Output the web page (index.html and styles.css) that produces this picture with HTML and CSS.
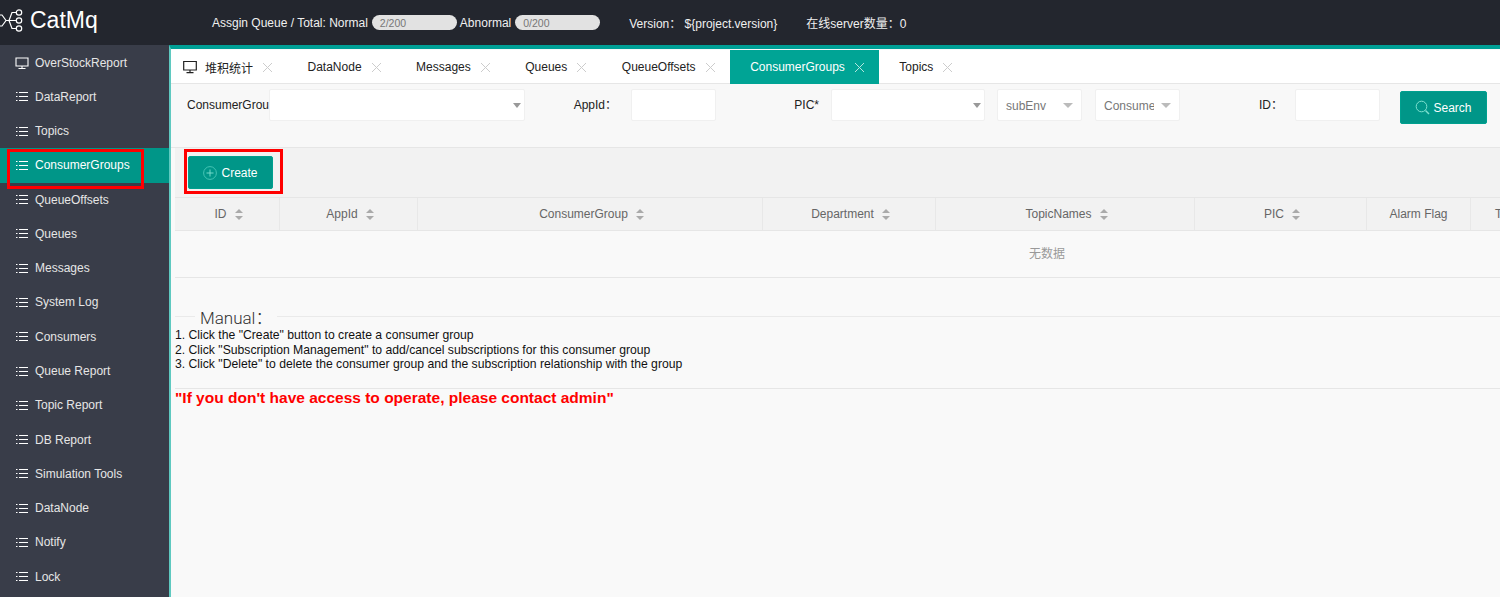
FILE: index.html
```html
<!DOCTYPE html>
<html lang="en">
<head>
  <meta charset="UTF-8">
  <title>CatMq</title>
  <link rel="stylesheet" href="styles.css">
</head>
<body>

  <!-- Top bar -->
  <header class="top-bar">
    <div class="logo">
      <svg class="logo-icon" viewBox="0 0 30 27" width="30" height="27">
        <path d="M1 8H7L11 13.5L7 19H1" fill="none" stroke="#fff" stroke-width="1.2"/>
        <path d="M11 13.5H21M14 13.5L17 5.5H21M14 13.5L17 21.5H21" fill="none" stroke="#fff" stroke-width="1.2"/>
        <circle cx="24" cy="5.5" r="2.7" fill="none" stroke="#fff" stroke-width="1.2"/>
        <circle cx="24" cy="13.5" r="2.7" fill="none" stroke="#fff" stroke-width="1.2"/>
        <circle cx="24" cy="21.5" r="2.7" fill="none" stroke="#fff" stroke-width="1.2"/>
      </svg>
      <span class="logo-text">CatMq</span>
    </div>
    <div class="status">
      <span class="status-label">Assgin Queue / Total: Normal</span>
      <span class="progress"><span class="progress-text">2/200</span></span>
      <span class="status-label">Abnormal</span>
      <span class="progress"><span class="progress-text">0/200</span></span>
      <span class="status-version">Version：&nbsp;${project.version}</span>
      <span class="status-server">在线server数量：0</span>
    </div>
  </header>

  <div class="main">
    <!-- Side menu -->
    <nav class="side-menu">
      <a class="menu-item">
        <svg class="menu-icon" viewBox="0 0 14 14" width="14" height="14"><path d="M1 2H13V10H1ZM7 10V12.5M3.5 12.5H10.5" fill="none" stroke="#fff" stroke-width="1.1"/></svg>
        OverStockReport
      </a>
      <a class="menu-item"><span class="list-icon"></span>DataReport</a>
      <a class="menu-item"><span class="list-icon"></span>Topics</a>
      <a class="menu-item active"><span class="list-icon"></span>ConsumerGroups<span class="mark mark-menu"></span></a>
      <a class="menu-item"><span class="list-icon"></span>QueueOffsets</a>
      <a class="menu-item"><span class="list-icon"></span>Queues</a>
      <a class="menu-item"><span class="list-icon"></span>Messages</a>
      <a class="menu-item"><span class="list-icon"></span>System Log</a>
      <a class="menu-item"><span class="list-icon"></span>Consumers</a>
      <a class="menu-item"><span class="list-icon"></span>Queue Report</a>
      <a class="menu-item"><span class="list-icon"></span>Topic Report</a>
      <a class="menu-item"><span class="list-icon"></span>DB Report</a>
      <a class="menu-item"><span class="list-icon"></span>Simulation Tools</a>
      <a class="menu-item"><span class="list-icon"></span>DataNode</a>
      <a class="menu-item"><span class="list-icon"></span>Notify</a>
      <a class="menu-item"><span class="list-icon"></span>Lock</a>
    </nav>

    <section class="content">
      <!-- Tabs -->
      <ul class="tabs">
        <li class="tab tab-home">
          <svg class="tab-icon" viewBox="0 0 14 14" width="14" height="14"><path d="M0.7 1.5H13.3V10H0.7ZM7 10V12.7M3.5 12.7H10.5" fill="none" stroke="#222" stroke-width="1.2"/></svg>
          堆积统计<span class="tab-close"></span>
        </li>
        <li class="tab">DataNode<span class="tab-close"></span></li>
        <li class="tab">Messages<span class="tab-close"></span></li>
        <li class="tab">Queues<span class="tab-close"></span></li>
        <li class="tab">QueueOffsets<span class="tab-close"></span></li>
        <li class="tab active">ConsumerGroups<span class="tab-close"></span></li>
        <li class="tab">Topics<span class="tab-close"></span></li>
      </ul>

      <!-- Filters -->
      <div class="filter-panel">
        <label class="filter-label first">ConsumerGroup</label>
        <div class="field select w-group"><span class="caret"></span></div>
        <label class="filter-label w-appid">AppId：</label>
        <div class="field w-input"></div>
        <label class="filter-label w-pic">PIC*</label>
        <div class="field select w-pic-select"><span class="caret"></span></div>
        <div class="field select w-small gap-left"><span class="placeholder">subEnv</span><span class="caret big"></span></div>
        <div class="field select w-small gap-left-wide"><span class="placeholder">Consumer</span><span class="caret big"></span></div>
        <label class="filter-label w-id">ID：</label>
        <div class="field w-input"></div>
        <button class="btn btn-search">
          <svg viewBox="0 0 15 15" width="15" height="15"><circle cx="6.5" cy="6.5" r="5.3" fill="none" stroke="#7fe0d0" stroke-width="1"/><path d="M10.5 10.5L14 14" stroke="#7fe0d0" stroke-width="1.4"/></svg>
          Search
        </button>
      </div>

      <!-- Toolbar -->
      <div class="toolbar">
        <button class="btn btn-create">
          <svg viewBox="0 0 14 14" width="14" height="14"><circle cx="7" cy="7" r="6.4" fill="none" stroke="#4cc8b8" stroke-width="0.9"/><path d="M7 3.5V10.5M3.5 7H10.5" stroke="#7fe0d0" stroke-width="0.9"/></svg>
          Create
        </button>
        <span class="mark mark-create"></span>
      </div>

      <!-- Table -->
      <div class="table-wrap">
        <div class="table-head">
          <div class="th c-id">ID<span class="sort"></span></div>
          <div class="th c-appid">AppId<span class="sort"></span></div>
          <div class="th c-group">ConsumerGroup<span class="sort"></span></div>
          <div class="th c-dept">Department<span class="sort"></span></div>
          <div class="th c-topic">TopicNames<span class="sort"></span></div>
          <div class="th c-pic">PIC<span class="sort"></span></div>
          <div class="th c-alarm">Alarm Flag</div>
          <div class="th c-last">T</div>
        </div>
        <div class="table-empty">无数据</div>
      </div>

      <!-- Manual -->
      <fieldset class="manual">
        <legend>Manual：</legend>
        <p>1. Click the "Create" button to create a consumer group</p>
        <p>2. Click "Subscription Management" to add/cancel subscriptions for this consumer group</p>
        <p>3. Click "Delete" to delete the consumer group and the subscription relationship with the group</p>
      </fieldset>
      <hr class="divider">
      <p class="warning">"If you don't have access to operate, please contact admin"</p>
    </section>
  </div>

</body>
</html>
```

FILE: styles.css
```css
/* General Styles */
html, body {
  height: 100%;
}

body {
  margin: 0;
  overflow: hidden;
  font-family: "Liberation Sans", "Noto Sans CJK SC", sans-serif;
  font-size: 12px;
  color: #333;
  background-color: #f9f9f9;
}

/* Top bar */
.top-bar {
  display: flex;
  align-items: center;
  height: 45px;
  background-color: #23262e;
  color: #fff;
}

.logo {
  display: flex;
  align-items: center;
  width: 212px;
  margin-top: -5px;
}

.logo-icon {
  margin-left: -5px;
  margin-right: 5px;
}

.logo-text {
  font-size: 23px;
  color: #fff;
}

.status {
  display: flex;
  align-items: center;
  font-size: 12px;
  color: #f0f0f0;
}

.progress {
  display: block;
  width: 85px;
  height: 15px;
  margin: 0 3px 0 4px;
  border-radius: 8px;
  background-color: #e2e2e2;
  line-height: 16px;
}

.progress-text {
  padding-left: 8px;
  font-size: 10.5px;
  color: #777;
}

.status-version {
  margin-left: 26px;
}

.status-server {
  margin-left: 29px;
}

/* Side menu */
.main {
  display: flex;
  height: 552px;
}

.side-menu {
  flex: none;
  width: 169px;
  padding-top: 0.5px;
  background-color: #393d49;
  overflow: hidden;
}

.menu-item {
  position: relative;
  display: flex;
  align-items: center;
  height: 34.27px;
  padding-left: 15px;
  color: #e6e6e6;
  font-size: 12px;
}

.menu-item.active {
  background-color: #009688;
  color: #fff;
}

.menu-icon {
  margin-right: 6px;
}

.list-icon {
  display: block;
  width: 12px;
  height: 9px;
  margin: 0 7px 0 1px;
  background:
    linear-gradient(#fff, #fff) 0 0 / 1.5px 1px no-repeat,
    linear-gradient(#fff, #fff) 0 4px / 1.5px 1px no-repeat,
    linear-gradient(#fff, #fff) 0 8px / 1.5px 1px no-repeat,
    linear-gradient(#fff, #fff) 3px 0 / 9px 1px no-repeat,
    linear-gradient(#fff, #fff) 3px 4px / 9px 1px no-repeat,
    linear-gradient(#fff, #fff) 3px 8px / 9px 1px no-repeat;
}

/* Red annotation boxes */
.mark {
  position: absolute;
  border: 3px solid #f00;
  box-sizing: border-box;
  pointer-events: none;
}

.mark-menu {
  left: 7px;
  top: 1px;
  width: 137px;
  height: 40px;
  z-index: 1;
}

.mark-create {
  left: 9px;
  top: 1px;
  width: 99px;
  height: 45px;
}

/* Tabs */
.content {
  flex: 1;
  min-width: 0;
  border-top: 4px solid #009f95;
  border-left: 2px solid #5fc9c0;
  overflow: hidden;
}

.tabs {
  display: flex;
  height: 34px;
  margin: 1px 0 0;
  padding: 0;
  list-style: none;
  background-color: #fff;
  border-bottom: 1px solid #e6e6e6;
  box-sizing: border-box;
}

.tab {
  display: flex;
  align-items: center;
  height: 34px;
  padding: 0 15.5px 0 20px;
  font-size: 12px;
  color: #222;
}

.tab-home {
  padding-left: 12px;
}

.tab-icon {
  margin-right: 8px;
}

.tab.active {
  background-color: #00a495;
  color: #fff;
}

.tab-close {
  width: 9px;
  height: 9px;
  margin-left: 10px;
  background:
    linear-gradient(45deg, transparent 46%, #ccc 46%, #ccc 54%, transparent 54%),
    linear-gradient(-45deg, transparent 46%, #ccc 46%, #ccc 54%, transparent 54%);
}

.tab.active .tab-close {
  background:
    linear-gradient(45deg, transparent 46%, #b5e6df 46%, #b5e6df 54%, transparent 54%),
    linear-gradient(-45deg, transparent 46%, #b5e6df 46%, #b5e6df 54%, transparent 54%);
}

/* Filters */
.filter-panel {
  display: flex;
  align-items: flex-start;
  height: 64px;
  padding: 5px 0 0 16px;
  background-color: #f8f8f8;
  border-bottom: 1px solid #e6e6e6;
  box-sizing: border-box;
}

.filter-label {
  flex: none;
  height: 32px;
  line-height: 33px;
  padding-right: 12px;
  box-sizing: border-box;
  text-align: right;
  color: #222;
  font-size: 12px;
  overflow: hidden;
  white-space: nowrap;
}

.filter-label.first {
  width: 82px;
  padding-right: 0;
  text-align: left;
}

.filter-label.w-appid { width: 106px; padding-right: 14px; }
.filter-label.w-pic { width: 115px; }
.filter-label.w-id { width: 115px; padding-right: 12px; }

.field {
  position: relative;
  flex: none;
  height: 32px;
  background-color: #fff;
  border: 1px solid #f0f0f0;
  border-radius: 2px;
  box-sizing: border-box;
  overflow: hidden;
}

.w-group { width: 256px; }
.w-input { width: 85px; }
.w-pic-select { width: 154px; }
.w-small { width: 85px; }
.gap-left { margin-left: 12px; }
.gap-left-wide { margin-left: 13px; }

.placeholder {
  display: block;
  width: 50px;
  padding-left: 8px;
  line-height: 32px;
  font-size: 12px;
  color: #777;
  overflow: hidden;
  white-space: nowrap;
}

.caret {
  position: absolute;
  right: 3px;
  top: 13px;
  width: 0;
  height: 0;
  border-left: 4px solid transparent;
  border-right: 4px solid transparent;
  border-top: 5px solid #999;
}

.caret.big {
  right: 8px;
  border-left-width: 5px;
  border-right-width: 5px;
  border-top-color: #bbb;
}

.btn {
  display: flex;
  align-items: center;
  justify-content: center;
  border: 1px solid #00a08f;
  border-radius: 2px;
  background-color: #009688;
  color: #fff;
  font-family: inherit;
  font-size: 12px;
  padding: 0;
}

.btn-search {
  width: 87px;
  height: 33px;
  margin: 2px 0 0 20px;
  gap: 3px;
}

/* Toolbar */
.toolbar {
  position: relative;
  height: 49px;
  margin-left: 4px;
  padding: 8px 0 0 13px;
  background-color: #f2f2f2;
  box-sizing: border-box;
}

.btn-create {
  width: 85px;
  height: 33px;
  gap: 4px;
}

/* Table */
.table-wrap {
  width: 1744px;
  margin-left: 4px;
  border-bottom: 1px solid #e6e6e6;
}

.table-head {
  display: flex;
  height: 34px;
  background-color: #f2f2f2;
  border-top: 1px solid #e6e6e6;
  border-bottom: 1px solid #e6e6e6;
  box-sizing: border-box;
}

.th {
  display: flex;
  flex: none;
  align-items: center;
  justify-content: center;
  padding-left: 4px;
  border-right: 1px solid #e8e8e8;
  box-sizing: border-box;
  font-size: 12px;
  color: #666;
}

.c-id { width: 105px; }
.c-appid { width: 138px; }
.c-group { width: 345px; }
.c-dept { width: 173px; }
.c-topic { width: 259px; }
.c-pic { width: 172px; }
.c-alarm { width: 104px; padding-left: 0; }
.c-last { width: 104px; justify-content: flex-start; padding-left: 24px; border-right: none; }

.sort {
  position: relative;
  width: 9px;
  height: 11px;
  margin-left: 8px;
}

.sort::before,
.sort::after {
  content: "";
  position: absolute;
  left: 0;
  border-left: 4px solid transparent;
  border-right: 4px solid transparent;
}

.sort::before {
  top: 0;
  border-bottom: 4px solid #aaa;
}

.sort::after {
  bottom: 0;
  border-top: 4px solid #aaa;
}

.table-empty {
  height: 46px;
  line-height: 46px;
  text-align: center;
  font-size: 12px;
  color: #999;
}

/* Manual */
.manual {
  margin: 26px 0 0 4px;
  padding: 0;
  border: none;
  border-top: 1px solid #eaeaea;
  min-width: 0;
  color: #111;
}

.manual legend {
  margin-left: 20px;
  margin-bottom: -1px;
  padding: 0 5px;
  font-family: Roboto, "Noto Sans CJK SC", sans-serif;
  font-size: 17px;
  font-weight: 300;
  color: #333;
}

.manual p {
  margin: 0;
  font-size: 12.2px;
  line-height: 14.5px;
}

.divider {
  height: 1px;
  margin: 16px 0 0 4px;
  border: none;
  background-color: #e6e6e6;
}

.warning {
  margin: 0 0 0 4px;
  font-size: 15.5px;
  line-height: 18px;
  font-weight: bold;
  color: #f00;
}
```
